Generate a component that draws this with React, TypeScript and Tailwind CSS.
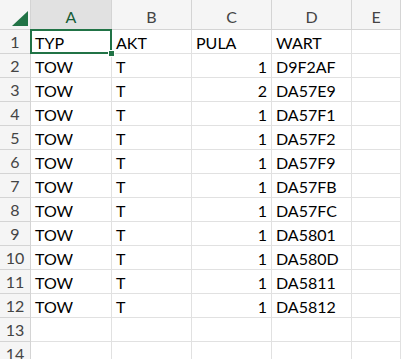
import React from "react";

const rows: [string, string, number, string][] = [
  ["TOW", "T", 1, "D9F2AF"],
  ["TOW", "T", 2, "DA57E9"],
  ["TOW", "T", 1, "DA57F1"],
  ["TOW", "T", 1, "DA57F2"],
  ["TOW", "T", 1, "DA57F9"],
  ["TOW", "T", 1, "DA57FB"],
  ["TOW", "T", 1, "DA57FC"],
  ["TOW", "T", 1, "DA5801"],
  ["TOW", "T", 1, "DA580D"],
  ["TOW", "T", 1, "DA5811"],
  ["TOW", "T", 1, "DA5812"],
];

const cell = "h-[24px] border-r border-b border-[#e1e1e1] px-[4px] flex items-end pb-[2px] text-black whitespace-nowrap overflow-hidden";
const rowHead = "h-[24px] border-r border-b border-[#d4d4d4] bg-[#f5f5f5] flex items-center justify-center text-[#444] pt-[1px]";

export default function App() {
  const cols = ["A", "B", "C", "D", "E"];
  return (
    <div
      className="w-[401px] h-[359px] overflow-hidden bg-white text-[16px] leading-none"
      style={{ fontFamily: "Lato, 'Open Sans', sans-serif" }}
    >
      <div className="grid grid-cols-[31px_81px_80px_80px_80px_1fr]">
        {/* header row */}
        <div className="h-[30px] border-r border-b border-[#d4d4d4] bg-[#f5f5f5] relative">
          <svg className="absolute left-[12px] top-[11px]" width="16" height="15" viewBox="0 0 16 15">
            <polygon points="16,0 16,15 0,15" fill="#217346" />
          </svg>
        </div>
        {cols.map((c, i) => (
          <div
            key={c}
            className={
              "h-[30px] border-r border-b flex items-center justify-center pt-[4px] " +
              (i === 0
                ? "bg-[#e1e1e1] border-[#d4d4d4] text-[#185c37]"
                : "bg-[#f5f5f5] border-[#d4d4d4] text-[#444]")
            }
          >
            {c}
          </div>
        ))}

        {/* row 1 */}
        <div className={rowHead + " bg-[#e1e1e1] text-[#185c37]"}>1</div>
        <div className={cell + " relative overflow-visible"}>
          TYP
          <div className="absolute left-[-1px] top-[-1px] right-[-1px] bottom-[-1px] border-2 border-[#217346] pointer-events-none" />
          <div className="absolute right-[-4px] bottom-[-4px] w-[7px] h-[7px] bg-[#217346] border border-white" />
        </div>
        <div className={cell}>AKT</div>
        <div className={cell}>PULA</div>
        <div className={cell}>WART</div>
        <div className={cell}></div>

        {rows.map((r, i) => (
          <React.Fragment key={i}>
            <div className={rowHead}>{i + 2}</div>
            <div className={cell}>{r[0]}</div>
            <div className={cell}>{r[1]}</div>
            <div className={cell + " justify-end"}>{r[2]}</div>
            <div className={cell}>{r[3]}</div>
            <div className={cell}></div>
          </React.Fragment>
        ))}

        {[13, 14].map((n) => (
          <React.Fragment key={n}>
            <div className={rowHead}>{n}</div>
            <div className={cell}></div>
            <div className={cell}></div>
            <div className={cell}></div>
            <div className={cell}></div>
            <div className={cell}></div>
          </React.Fragment>
        ))}
      </div>
    </div>
  );
}
